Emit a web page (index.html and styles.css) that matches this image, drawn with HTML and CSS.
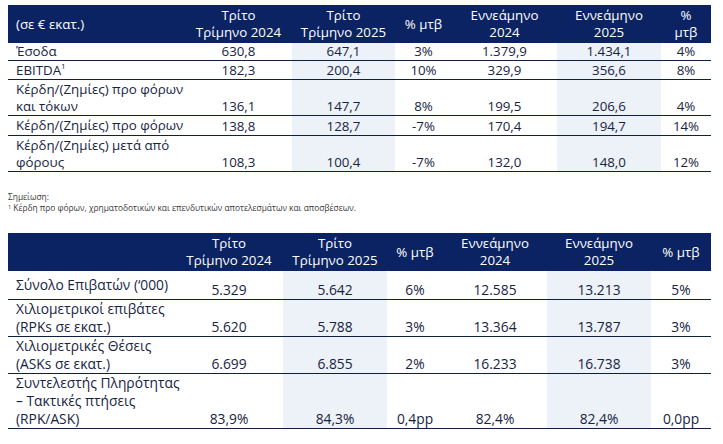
FILE: index.html
```html
<!DOCTYPE html>
<html lang="el">
<head>
<meta charset="utf-8">
<link rel="stylesheet" href="styles.css">
</head>
<body>
<div class="page">
  <table class="tbl fin">
    <colgroup>
      <col class="f1"><col class="f2"><col class="f3"><col class="f4"><col class="f5"><col class="f6"><col class="f7">
    </colgroup>
    <thead>
      <tr class="hd">
        <th class="lbl">(σε € εκατ.)</th>
        <th>Τρίτο<br>Τρίμηνο 2024</th>
        <th>Τρίτο<br>Τρίμηνο 2025</th>
        <th>% μτβ</th>
        <th>Εννεάμηνο<br>2024</th>
        <th>Εννεάμηνο<br>2025</th>
        <th>%<br>μτβ</th>
      </tr>
    </thead>
    <tbody>
      <tr class="r17">
        <td class="lbl">Έσοδα</td><td>630,8</td><td class="sh">647,1</td><td>3%</td><td>1.379,9</td><td class="sh">1.434,1</td><td>4%</td>
      </tr>
      <tr class="r19">
        <td class="lbl">EBITDA<sup>1</sup></td><td>182,3</td><td class="sh">200,4</td><td>10%</td><td>329,9</td><td class="sh">356,6</td><td>8%</td>
      </tr>
      <tr class="r36">
        <td class="lbl">Κέρδη/(Ζημίες) προ φόρων<br>και τόκων</td><td>136,1</td><td class="sh">147,7</td><td>8%</td><td>199,5</td><td class="sh">206,6</td><td>4%</td>
      </tr>
      <tr class="r20">
        <td class="lbl">Κέρδη/(Ζημίες) προ φόρων</td><td>138,8</td><td class="sh">128,7</td><td>-7%</td><td>170,4</td><td class="sh">194,7</td><td>14%</td>
      </tr>
      <tr class="r36">
        <td class="lbl">Κέρδη/(Ζημίες) μετά από<br>φόρους</td><td>108,3</td><td class="sh">100,4</td><td>-7%</td><td>132,0</td><td class="sh">148,0</td><td>12%</td>
      </tr>
    </tbody>
  </table>

  <div class="note">
    <p>Σημείωση:</p>
    <p><sup>1</sup> Κέρδη προ φόρων, χρηματοδοτικών και επενδυτικών αποτελεσμάτων και αποσβέσεων.</p>
  </div>

  <table class="tbl ops">
    <colgroup>
      <col class="o1"><col class="o2"><col class="o3"><col class="o4"><col class="o5"><col class="o6"><col class="o7">
    </colgroup>
    <thead>
      <tr class="hd">
        <th class="lbl"></th>
        <th>Τρίτο<br>Τρίμηνο 2024</th>
        <th>Τρίτο<br>Τρίμηνο 2025</th>
        <th>% μτβ</th>
        <th>Εννεάμηνο<br>2024</th>
        <th>Εννεάμηνο<br>2025</th>
        <th>% μτβ</th>
      </tr>
    </thead>
    <tbody>
      <tr class="r28">
        <td class="lbl">Σύνολο Επιβατών (‘000)</td><td>5.329</td><td class="sh">5.642</td><td>6%</td><td>12.585</td><td class="sh">13.213</td><td>5%</td>
      </tr>
      <tr class="r36">
        <td class="lbl">Χιλιομετρικοί επιβάτες<br>(RPKs σε εκατ.)</td><td>5.620</td><td class="sh">5.788</td><td>3%</td><td>13.364</td><td class="sh">13.787</td><td>3%</td>
      </tr>
      <tr class="r37">
        <td class="lbl">Χιλιομετρικές Θέσεις<br>(ASKs σε εκατ.)</td><td>6.699</td><td class="sh">6.855</td><td>2%</td><td>16.233</td><td class="sh">16.738</td><td>3%</td>
      </tr>
      <tr class="r54">
        <td class="lbl">Συντελεστής Πληρότητας<br>– Τακτικές πτήσεις<br>(RPK/ASK)</td><td>83,9%</td><td class="sh">84,3%</td><td>0,4pp</td><td>82,4%</td><td class="sh">82,4%</td><td>0,0pp</td>
      </tr>
    </tbody>
  </table>
</div>
</body>
</html>
```

FILE: styles.css
```css
* { box-sizing: border-box; }
html, body { margin: 0; padding: 0; background: #ffffff; }
body {
  font-family: "Open Sans", "Noto Sans", "DejaVu Sans", sans-serif;
  color: #17243f;
}
.page {
  padding: 5px 0 0 8px;
  width: 711px;
}
.tbl {
  width: 703px;
  table-layout: fixed;
  border-collapse: collapse;
  font-size: 13.3px;
  line-height: 17px;
}
.tbl th, .tbl td {
  padding: 0 2px;
  text-align: center;
  white-space: nowrap;
}
.tbl th {
  font-weight: 400;
  background: #0b2362;
  color: #ffffff;
  vertical-align: middle;
  height: 38px;
}
.tbl td {
  vertical-align: bottom;
  border-bottom: 1px solid #10203f;
  padding-bottom: 0;
}
.tbl .lbl {
  text-align: left;
  padding-left: 8px;
  vertical-align: middle;
}
.tbl td.sh { background: #edf1f8; }
.tbl sup { font-size: 8px; line-height: 0; vertical-align: 6px; }

.f1 { width: 177px; } .f2 { width: 107px; } .f3 { width: 103px; } .f4 { width: 57px; }
.f5 { width: 105px; } .f6 { width: 104px; } .f7 { width: 50px; }

.o1 { width: 167px; } .o2 { width: 108px; } .o3 { width: 104px; } .o4 { width: 56px; }
.o5 { width: 104px; } .o6 { width: 104px; } .o7 { width: 60px; }

.r17 td { height: 17px; }
.r19 td { height: 19px; }
.r20 td { height: 20px; }
.r28 td { height: 28px; }
.r36 td { height: 36px; }
.r37 td { height: 37px; }
.r54 td { height: 54px; }

.ops { margin-top: 20px; line-height: 18px; }
.ops td { font-size: 13.8px; }
.ops th { height: 38px; line-height: 17px; }

.note {
  margin-top: 19px;
  font-size: 8.4px;
  line-height: 11px;
  color: #3a3a3a;
}
.note p { margin: 0; }
.note sup { font-size: 5.5px; vertical-align: 2px; line-height: 0; }
```
